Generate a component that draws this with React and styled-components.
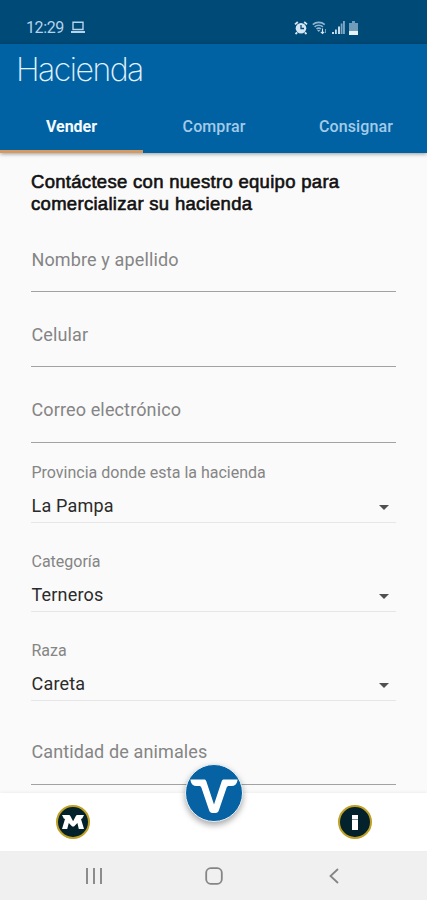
import React, { useState } from 'react';
import styled, { createGlobalStyle } from 'styled-components';

const GlobalStyle = createGlobalStyle`
  * {
    box-sizing: border-box;
  }

  body {
    margin: 0;
    font-family: Roboto, 'Liberation Sans', sans-serif;
  }
`;

const Screen = styled.div`
  display: flex;
  flex-direction: column;
  width: 427px;
  height: 900px;
  overflow: hidden;
  background: #fafafa;
`;

const StatusBar = styled.div`
  display: flex;
  flex: none;
  align-items: center;
  justify-content: space-between;
  height: 44px;
  padding: 11px 69px 0 26px;
  background: #004a78;
  color: #b5d3ea;
`;

const StatusGroup = styled.div`
  display: flex;
  align-items: center;
  gap: ${(props) => props.$gap}px;
`;

const Clock = styled.span`
  font-size: 16px;
  line-height: 20px;
  letter-spacing: -0.4px;
`;

const Header = styled.header`
  display: flex;
  flex: none;
  flex-direction: column;
  justify-content: space-between;
  height: 109px;
  background: #0062a3;
  box-shadow: 0 1px 4px rgba(0, 0, 0, 0.4);
`;

const Title = styled.h1`
  margin: 0;
  padding: 6px 0 0 16px;
  color: #e2f2fc;
  font-family: Inter, 'Liberation Sans', sans-serif;
  font-size: 32px;
  font-weight: 200;
  line-height: 40px;
  letter-spacing: -1.5px;
`;

const Tabs = styled.nav`
  display: grid;
  grid-template-columns: 143px 1fr 142px;
  height: 51px;
`;

const Tab = styled.button`
  padding: 0;
  border: none;
  border-bottom: 3px solid ${(props) => (props.$active ? '#d49a62' : 'transparent')};
  background: none;
  color: ${(props) => (props.$active ? '#f4faff' : '#a3cbe8')};
  font-family: inherit;
  font-size: 16px;
  font-weight: ${(props) => (props.$active ? 700 : 500)};
  letter-spacing: ${(props) => (props.$active ? 0 : 0.1)}px;
`;

const Form = styled.main`
  flex: 1;
  min-height: 0;
  padding: 18px 31px 0;
  overflow: hidden;
`;

const Intro = styled.p`
  margin: 0 0 14px;
  color: #111;
  font-family: 'Liberation Sans', sans-serif;
  font-size: 18.5px;
  line-height: 22px;
  letter-spacing: 0.3px;
  white-space: nowrap;
  -webkit-text-stroke: 0.6px #111;
`;

const Input = styled.input`
  display: block;
  width: 100%;
  height: 63px;
  margin-top: ${(props) => props.$top || 12.4}px;
  padding: 0 0 2px 0.5px;
  border: none;
  border-bottom: 1px solid #a2a2a2;
  border-radius: 0;
  outline: none;
  background: none;
  color: #222;
  font-family: inherit;
  font-size: 18px;
  letter-spacing: 0.13px;

  &::placeholder {
    color: #858585;
    opacity: 1;
  }
`;

const Field = styled.div`
  height: 60px;
  margin-top: ${(props) => props.$top || 29}px;
  padding-left: 0.5px;
  border-bottom: 1px solid #e6e6e6;
`;

const Label = styled.div`
  color: #858585;
  font-size: 16px;
  line-height: 20px;
`;

const Select = styled.div`
  display: flex;
  align-items: center;
  justify-content: space-between;
  height: 24px;
  margin-top: 11px;
  padding-right: 7px;
  color: #2b2b2b;
  font-size: 18px;
  letter-spacing: 0.2px;
`;

const Arrow = styled.span`
  border: 5px solid transparent;
  border-top-color: #505050;
  border-bottom: 0;
  margin-top: 3px;
`;

const BottomBar = styled.nav`
  position: relative;
  display: grid;
  flex: none;
  grid-template-columns: 146px 1fr 144px;
  align-items: center;
  justify-items: center;
  height: 58px;
  background: #fff;
  box-shadow: 0 -1px 3px rgba(0, 0, 0, 0.05);
`;

const Badge = styled.button`
  display: flex;
  grid-column: ${(props) => props.$column};
  align-items: center;
  justify-content: center;
  width: 34px;
  height: 34px;
  padding: 0;
  border: 2px solid #bfa024;
  border-radius: 50%;
  background: #04222b;
`;

const MainAction = styled.button`
  position: absolute;
  top: -29px;
  left: 185px;
  width: 58px;
  height: 58px;
  padding: 0;
  border: 1px solid #e8f0f5;
  border-radius: 50%;
  background: #0762a3;
  box-shadow: 0 3px 6px rgba(0, 0, 0, 0.35);

  svg {
    display: block;
  }
`;

const SystemBar = styled.footer`
  display: grid;
  flex: none;
  grid-template-columns: 147px 93px 147px;
  align-items: center;
  justify-content: center;
  justify-items: center;
  height: 49px;
  background: #f0f0f0;
`;

const LaptopIcon = () => (
  <svg width="16" height="13" viewBox="0 0 16 13" fill="none" stroke="currentColor">
    <path d="M3 1.2h10v7.3H3z" strokeWidth="1.4" />
    <path d="M1 11h14" strokeWidth="2" />
  </svg>
);

const AlarmIcon = () => (
  <svg width="14" height="14" viewBox="0 0 14 14">
    <path d="M1 3.4 3.8 1M13 3.4 10.2 1M3.2 11.3 1.5 13M10.8 11.3l1.7 1.7" stroke="#d5e6f2" strokeWidth="1.8" />
    <circle cx="7" cy="7.2" r="5.3" fill="#d5e6f2" />
    <path d="M7 4v3.5h3" stroke="#004a78" strokeWidth="1.3" fill="none" />
  </svg>
);

const WifiIcon = () => (
  <svg width="15" height="14" viewBox="0 0 15 14" fill="none" stroke="#8fb5d0">
    <path d="M.8 3.6C4 .6 9.5.6 12.7 3.6M2.6 5.8c2.3-2 6-2 8.3 0M4.5 8c1.3-1.1 3.2-1.1 4.5 0" strokeWidth="1.6" />
    <path d="M5 9h3.5l-1.8 2z" fill="#8fb5d0" stroke="none" />
    <path d="M10.5 7.5v5M8.8 10.8l1.7 1.7 1.7-1.7" stroke="#d5e6f2" strokeWidth="1.1" />
    <path d="M13.5 12V8" strokeWidth=".8" />
  </svg>
);

const SignalIcon = () => (
  <svg width="13" height="13" viewBox="0 0 13 13">
    <path d="M0 11h2v2H0zM3 8.5h1.8V13H3zM6 5.5h2V13H6z" fill="#c5dcec" />
    <path d="M8.7 2.5h1.8V13H8.7zM11 0h1.9v13H11z" fill="#7da6c4" />
  </svg>
);

const BatteryIcon = () => (
  <svg width="9" height="14" viewBox="0 0 9 14">
    <path d="M3 0h3v2h3v12H0V2h3z" fill="#6f9cbb" />
    <path d="M0 10h9v4H0z" fill="#e6f1f8" />
  </svg>
);

const MonogramIcon = () => (
  <svg width="24" height="18" viewBox="0 0 24 18" fill="#fff">
    <path d="M1 2h6.5c1 0 1.600.4 2 1.200l2.600 5 2.600-5c.4-.8 1-1.200 2-1.200H23l-1.800 3.500-1.200.5 3 10h-5.200L16.400 10 13 13.500h-1.800L7.800 10 6.200 16H1l3-10-1.200-.5z" />
  </svg>
);

const InfoIcon = () => (
  <svg width="6" height="15" viewBox="0 0 6 15">
    <path d="M0 0h6v4H0zM0 5h6v10H0z" fill="#fff" />
    <path d="M0 4h6v1H0z" fill="#7d8f96" />
  </svg>
);

const BrandIcon = () => (
  <svg width="56" height="56" viewBox="0 0 56 56">
    <path
      d="M4.5 14.5H18c1.3 0 1.9.5 2.3 1.7L28 39.5l7.700-23.300c.4-1.200 1-1.700 2.300-1.700h13.500v1c-.8 3.700-2.700 5.500-6 5.500h-2.500c-1.300 0-2 .5-2.500 2l-7.600 22.300c-.7 2-1.500 2.700-3.400 2.700h-3c-1.900 0-2.700-.7-3.400-2.700L15.500 23c-.5-1.500-1.200-2-2.500-2h-2.500c-3.300 0-5.200-1.800-6-5.500z"
      fill="#fff"
    />
  </svg>
);

const tabs = ['Vender', 'Comprar', 'Consignar'];

const App = () => {
  const [active, setActive] = useState('Vender');

  return (
    <Screen>
      <GlobalStyle />
      <StatusBar>
        <StatusGroup $gap={6}>
          <Clock>12:29</Clock>
          <LaptopIcon />
        </StatusGroup>
        <StatusGroup $gap={4.5}>
          <AlarmIcon />
          <WifiIcon />
          <SignalIcon />
          <BatteryIcon />
        </StatusGroup>
      </StatusBar>

      <Header>
        <Title>Hacienda</Title>
        <Tabs>
          {tabs.map((tab) => (
            <Tab key={tab} $active={tab === active} onClick={() => setActive(tab)}>
              {tab}
            </Tab>
          ))}
        </Tabs>
      </Header>

      <Form>
        <Intro>
          Contáctese con nuestro equipo para
          <br />
          comercializar su hacienda
        </Intro>
        <Input type="text" placeholder="Nombre y apellido" />
        <Input type="tel" placeholder="Celular" />
        <Input type="email" placeholder="Correo electrónico" />
        <Field $top={20}>
          <Label>Provincia donde esta la hacienda</Label>
          <Select>
            La Pampa
            <Arrow />
          </Select>
        </Field>
        <Field>
          <Label>Categoría</Label>
          <Select>
            Terneros
            <Arrow />
          </Select>
        </Field>
        <Field>
          <Label>Raza</Label>
          <Select>
            Careta
            <Arrow />
          </Select>
        </Field>
        <Input $top={21} type="text" placeholder="Cantidad de animales" />
      </Form>

      <BottomBar>
        <Badge $column={1}>
          <MonogramIcon />
        </Badge>
        <MainAction>
          <BrandIcon />
        </MainAction>
        <Badge $column={3}>
          <InfoIcon />
        </Badge>
      </BottomBar>

      <SystemBar>
        <svg width="18" height="16" viewBox="0 0 18 16" stroke="#8c8c8c" strokeWidth="2">
          <path d="M2 0v16M9 0v16M16 0v16" />
        </svg>
        <svg width="18" height="18" viewBox="0 0 18 18" fill="none" stroke="#858585" strokeWidth="1.8">
          <rect x="1.2" y="1.2" width="15.6" height="15.6" rx="4.5" />
        </svg>
        <svg width="10" height="16" viewBox="0 0 10 16" fill="none" stroke="#858585" strokeWidth="1.8">
          <path d="M9 1 1.5 8 9 15" />
        </svg>
      </SystemBar>
    </Screen>
  );
};

export default App;
